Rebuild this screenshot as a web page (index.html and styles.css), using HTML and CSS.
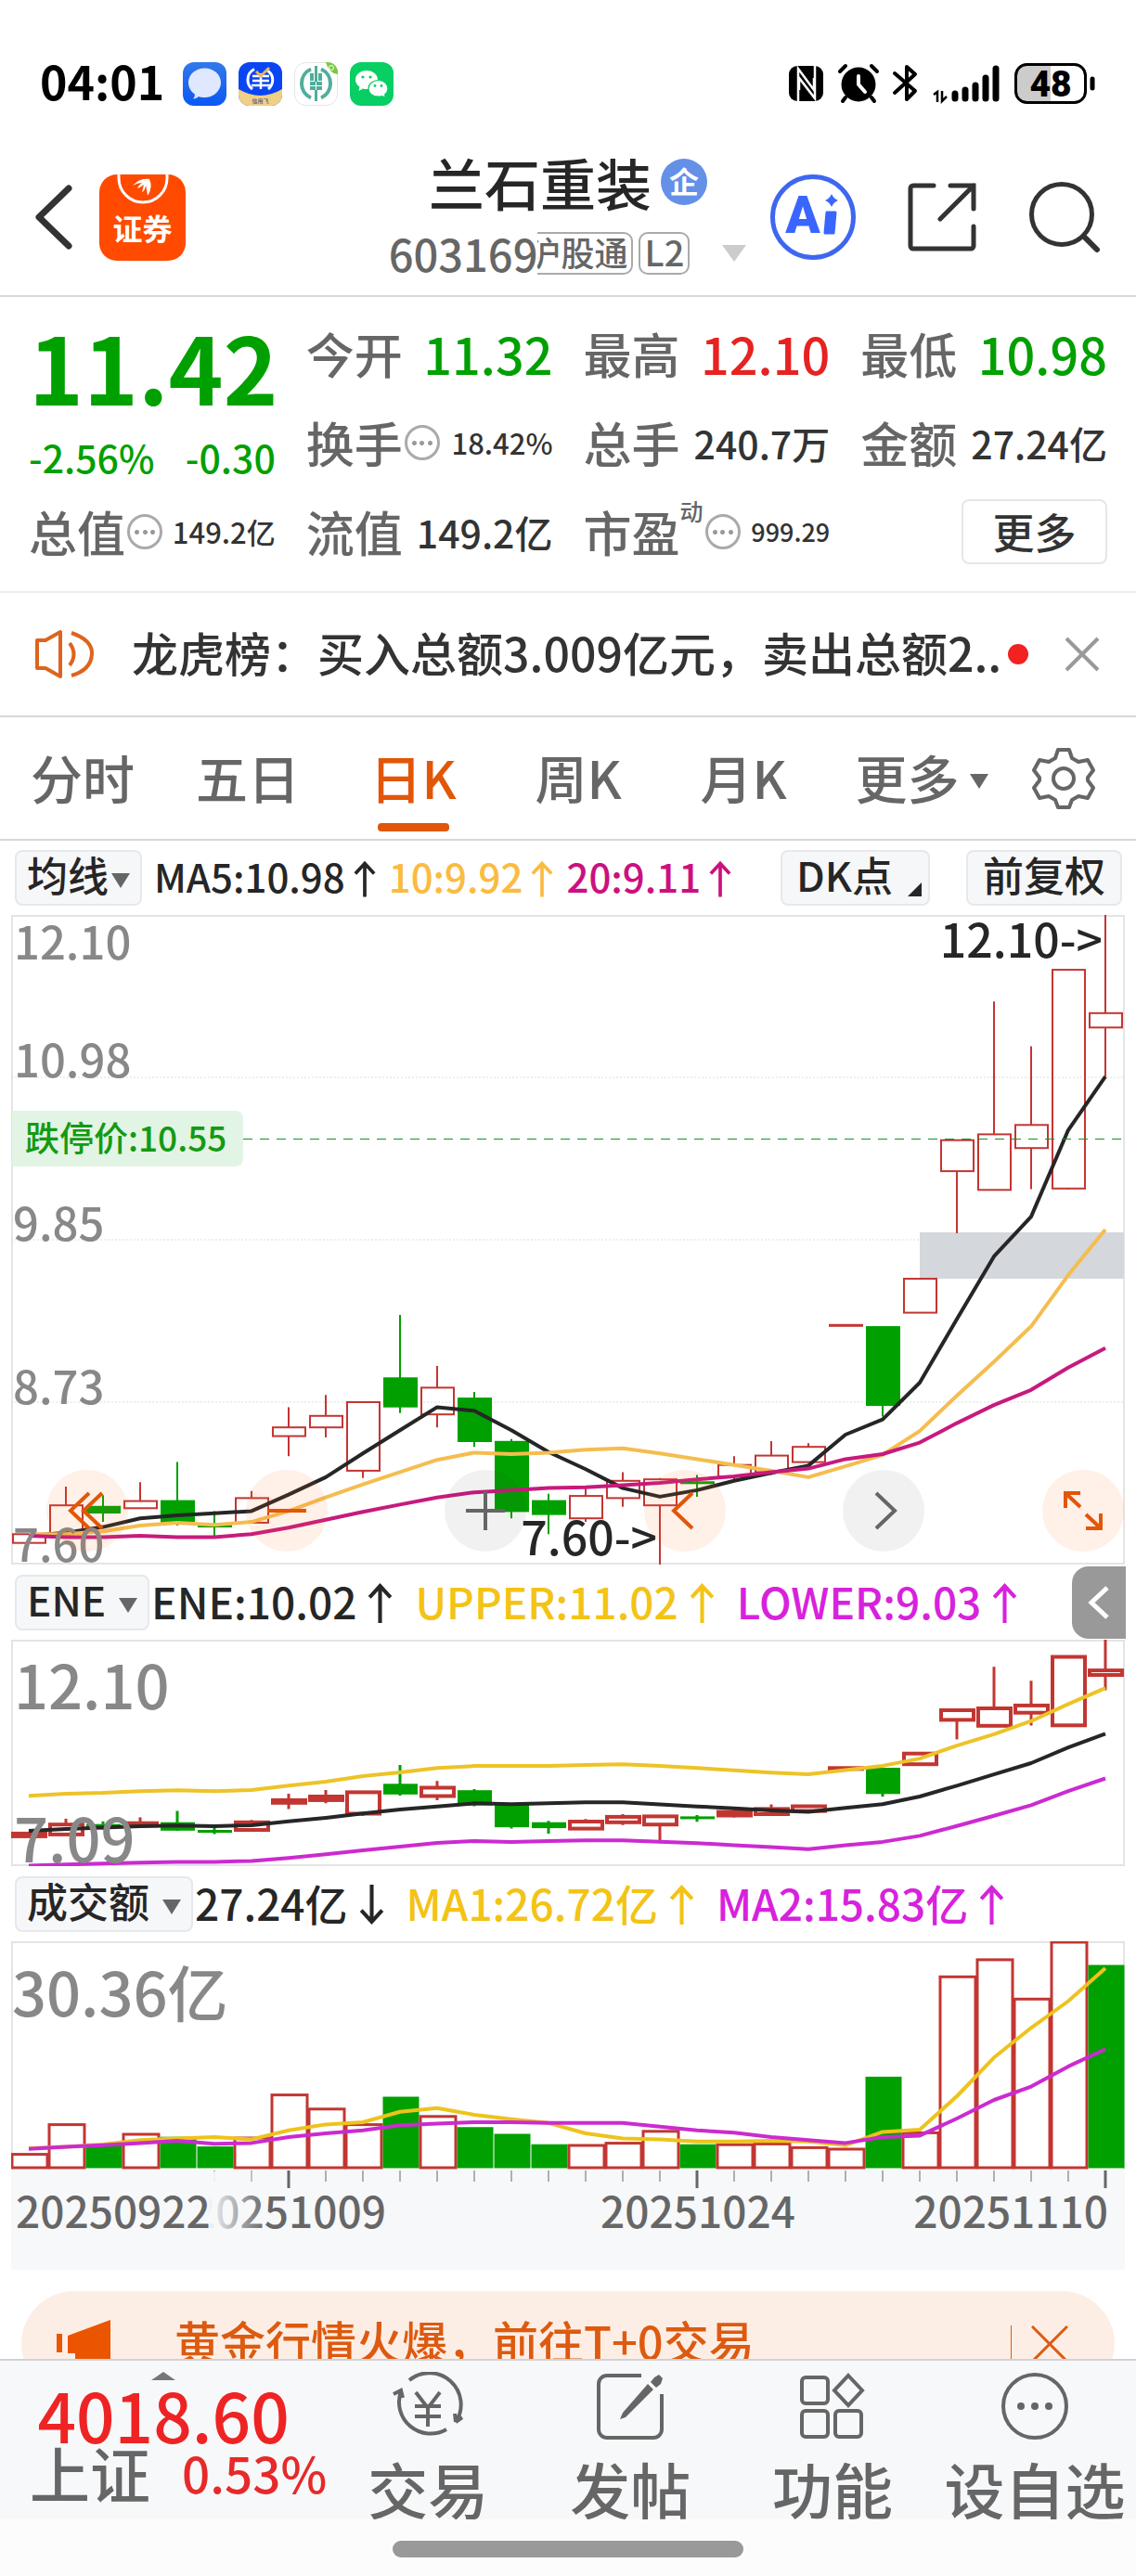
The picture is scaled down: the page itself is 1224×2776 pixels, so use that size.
FILE: index.html
```html
<!DOCTYPE html>
<html lang="zh-CN">
<head>
    <meta charset="UTF-8">
    <meta name="viewport" content="width=device-width, initial-scale=1">
    <title>兰石重装 603169</title>
    <link rel="stylesheet" href="styles.css">
</head>

<body>
    <main class="page">
        <div class="status">
            <span class="clock">04:01</span>
            <svg class="app" viewBox="0 0 47 47">
                <defs><linearGradient id="blue" x1="0" y1="0" x2="0" y2="1"><stop offset="0" stop-color="#3478ea"/><stop offset="1" stop-color="#0a58f5"/></linearGradient></defs>
                <rect width="47" height="47" rx="12" fill="url(#blue)"/>
                <path d="M23.500 6.500c10 0 17.500 7 17.500 15.500S33.500 38 23.500 38c-2.500 0-4.500-.4-6.500-1-1.500 1.500-3.500 2.500-6 2.500 1.500-1.500 2-3 1.800-5C8.500 31.500 6 27 6 22 6 13.500 13.500 6.500 23.500 6.500z" fill="#dfe8ff"/>
            </svg>
            <svg class="app" viewBox="0 0 47 47">
                <rect width="47" height="47" rx="12" fill="#0a45f2"/>
                <path d="M0 29q23.500 14 47 0v6a12 12 0 0 1-12 12H12A12 12 0 0 1 0 35z" fill="#f1cf84"/>
                <path d="M17 7.500C8 12 8 24 15 29M31 9c8 5 7 15 1 20" fill="none" stroke="#fff" stroke-width="3"/>
                <path d="M15 15h18M15 20h18M14 25h20M24 12v17" stroke="#fff" stroke-width="2.500"/>
                <path d="M19 10l5 5 9-9" fill="none" stroke="#e3b566" stroke-width="3"/>
                <text x="23.500" y="44" class="tiny">信用飞</text>
            </svg>
            <svg class="app" viewBox="0 0 47 47">
                <rect x=".5" y=".5" width="46" height="46" rx="12" fill="#fff" stroke="#e4e4e4"/>
                <path d="M34 0h2a11 11 0 0 1 11 11v2Q37 12 34 0z" fill="#7ac943"/>
                <circle cx="40" cy="6" r="2.500" fill="none" stroke="#fff"/>
                <path d="M18 7.500a17 17 0 0 0 0 31M29 7.500a17 17 0 0 1 0 31" fill="none" stroke="#4fae9b" stroke-width="4"/>
                <path d="M23.500 4v38" stroke="#4fae9b" stroke-width="3"/>
                <path d="M17 12h4v8h-4zM26 12h4v8h-4zM17 21h13v9H17z" fill="#4fae9b"/>
                <path d="M17 25.500h13M23.500 21v9" stroke="#fff"/>
            </svg>
            <svg class="app" viewBox="0 0 47 47">
                <rect width="47" height="47" rx="12" fill="#07cf63"/>
                <path d="M18 9c7 0 12 4.500 12 10s-5 10-12 10c-1.500 0-3-.2-4-.6L9.500 31l1-4.500C7.500 24.500 6 22 6 19 6 13.500 11 9 18 9z" fill="#fff"/>
                <path d="M30.500 19.500c6 0 10.500 4 10.500 9 0 2.500-1.300 4.800-3.400 6.400l.9 3.600-3.900-2c-1.300.4-2.600.6-4.100.6-6 0-10.500-3.800-10.500-8.600s4.500-9 10.500-9z" fill="#fff" stroke="#07cf63" stroke-width="1.200"/>
                <g fill="#07cf63"><circle cx="14" cy="16" r="1.600"/><circle cx="22" cy="16" r="1.600"/><circle cx="27" cy="25.500" r="1.400"/><circle cx="34" cy="25.500" r="1.400"/></g>
            </svg>
            <svg class="sys" viewBox="0 0 336 46">
                <rect x="6" y="4" width="37" height="38" rx="9"/>
                <path d="M16 42V7l17 23V17M34 4v35L17 17v13" fill="none" stroke="#fff" stroke-width="2.500"/>
                <circle cx="81" cy="24" r="18.500"/>
                <path d="M81 15v9l7 8" fill="none" stroke="#fff" stroke-width="4" stroke-linecap="round"/>
                <path d="M61 10l6-6M101 10l-6-6M67 38l-3 4M95 38l3 4" stroke="#000" stroke-width="4" stroke-linecap="round"/>
                <path d="M120 12l22 19-9 9V5l9 8-22 20" fill="none" stroke="#000" stroke-width="4" stroke-linejoin="round" stroke-linecap="round"/>
                <path d="M162 35l4-3v11M171 31v11l5-5" fill="none" stroke="#000" stroke-width="2.500"/>
                <g stroke="#000" stroke-width="7" stroke-linecap="round"><path d="M185 34v5M196 30v9M207 25v14M218 17v22M229 7v32"/></g>
                <rect x="250.500" y="2.500" width="75" height="41" rx="12" fill="#fff"/>
                <path d="M288 3v40h-26a11 11 0 0 1-11-11V14a11 11 0 0 1 11-11z" fill="#ccc"/>
                <rect x="250.500" y="2.500" width="75" height="41" rx="12" fill="none" stroke="#000" stroke-width="3"/>
                <path d="M333 18v10" stroke="#000" stroke-width="5" stroke-linecap="round"/>
                <text x="288" y="37" class="charge">48</text>
            </svg>
        </div>

        <header class="header">
            <div class="header-side">
                <button class="plain" aria-label="返回">
                    <svg width="40" height="70" viewBox="0 0 40 70"><path d="M36 4L4 35l32 31" fill="none" stroke="#333" stroke-width="7" stroke-linecap="round" stroke-linejoin="round"/></svg>
                </button>
                <a class="brand" href="#" aria-label="证券">
                    <svg width="93" height="93" viewBox="0 0 93 93">
                        <rect width="93" height="93" rx="19" fill="#ff4a00"/>
                        <path d="M21 0v4a26 26 0 0 0 52 0V0" fill="none" stroke="#fff" stroke-width="3"/>
                        <path d="M36 12q8-9 18-7 4 9-2 18-1-8-2-11-1 6-4 7 1-4 2-8-4 3-7 4 2-4 5-6-5 0-10 3z" fill="#fff"/>
                        <text x="46.500" y="71" class="brand-text">证券</text>
                    </svg>
                </a>
            </div>
            <div class="stock">
                <h1 class="stock-name">兰石重装 <span class="badge">企</span></h1>
                <div class="stock-code">
                    <span>603169</span>
                    <span class="tag-clip"><span class="tag">沪股通</span></span>
                    <span class="tag tag-l2">L2</span>
                    <svg width="28" height="20" viewBox="0 0 28 20"><path d="M1 1h26L14 19z" fill="#ccc"/></svg>
                </div>
            </div>
            <div class="header-side header-tools">
                <button class="plain" aria-label="Ai">
                    <svg width="92" height="92" viewBox="0 0 92 92">
                        <circle cx="46" cy="46" r="43.500" fill="none" stroke="#3e67f0" stroke-width="5"/>
                        <text x="35" y="63" class="ai">A</text>
                        <path d="M61 41h9l-2 22h-9z" fill="#3a66ff" stroke="#3a66ff" stroke-width="3" stroke-linejoin="round"/>
                        <path d="M66 21q2 5 7 7-5 2-7 7-2-5-7-7 5-2 7-7z" fill="#3a66ff"/>
                    </svg>
                </button>
                <button class="plain" aria-label="分享">
                    <svg width="74" height="74" viewBox="0 0 74 74"><path d="M28 3H6a3 3 0 0 0-3 3v62a3 3 0 0 0 3 3h62a3 3 0 0 0 3-3V47M46 3h25v25M71 3L35 39" fill="none" stroke="#333" stroke-width="5" stroke-linecap="round"/></svg>
                </button>
                <button class="plain" aria-label="搜索">
                    <svg width="78" height="78" viewBox="0 0 78 78"><circle cx="36" cy="36" r="32.500" fill="none" stroke="#333" stroke-width="5"/><path d="M60 60l14 14" stroke="#333" stroke-width="6" stroke-linecap="round"/></svg>
                </button>
            </div>
        </header>

        <section class="quote">
            <div class="price">
                <strong>11.42</strong>
                <div class="change"><span>-2.56%</span><span>-0.30</span></div>
            </div>
            <div class="item"><span>今开</span><b class="big green">11.32</b></div>
            <div class="item"><span>最高</span><b class="big red">12.10</b></div>
            <div class="item"><span>最低</span><b class="big green">10.98</b></div>
            <div class="item"><span>换手</span><i class="info"></i><b class="small">18.42%</b></div>
            <div class="item"><span>总手</span><b>240.7万</b></div>
            <div class="item"><span>金额</span><b>27.24亿</b></div>
            <div class="item"><span>总值</span><i class="info"></i><b class="small">149.2亿</b></div>
            <div class="item"><span>流值</span><b>149.2亿</b></div>
            <div class="item"><span>市盈</span><sup>动</sup><i class="info"></i><b class="tight">999.29</b></div>
            <div class="item"><button class="more">更多</button></div>
        </section>

        <section class="notice">
            <svg width="64" height="54" viewBox="0 0 64 54"><path d="M3 12h9L28 3v48L12 42H3z" fill="none" stroke="#dd641f" stroke-width="4" stroke-linejoin="round"/><path d="M38 15q9 12 0 24M40 4q23 8 22 23-1 17-22 23" fill="none" stroke="#dd641f" stroke-width="4"/></svg>
            <p>龙虎榜：买入总额3.009亿元，卖出总额2..</p>
            <i class="dot"></i>
            <button class="plain" aria-label="关闭"><svg width="38" height="38" viewBox="0 0 38 38"><path d="M2 2l34 34M36 2L2 36" stroke="#999" stroke-width="4"/></svg></button>
        </section>

        <nav class="tabs">
            <a href="#">分时</a>
            <a href="#">五日</a>
            <a href="#" class="active">日K</a>
            <a href="#">周K</a>
            <a href="#">月K</a>
            <a href="#" class="wide">更多<i class="caret"></i></a>
            <button class="plain gear" aria-label="设置">
                <svg width="68" height="68" viewBox="0 0 68 68"><path d="M28 3h12l3 9 7 4 10-2 6 11-6 8v3l6 8-6 11-10-2-7 4-3 8H28l-3-8-7-4-10 2-6-11 6-8v-3l-6-8 6-11 10 2 7-4z" fill="none" stroke="#666" stroke-width="4" stroke-linejoin="round"/><circle cx="34" cy="34" r="11" fill="none" stroke="#666" stroke-width="4"/></svg>
            </button>
        </nav>

        <div class="legend">
            <button class="chip">均线<i class="caret"></i></button>
            <span class="val">MA5:10.98<svg class="arrow"><use href="#up"/></svg></span>
            <span class="val orange">10:9.92<svg class="arrow"><use href="#up"/></svg></span>
            <span class="val pink">20:9.11<svg class="arrow"><use href="#up"/></svg></span>
            <button class="chip dk">DK点<i class="corner"></i></button>
            <button class="chip">前复权</button>
        </div>
        <div class="chart">
            <svg viewBox="0 0 1200 700">
                <rect class="frame" x="1" y="1" width="1198" height="698"/>
                <path class="grid" d="M0 175h1200M0 350h1200M0 525h1200"/>
                <rect x="979" y="342" width="220" height="50" fill="#d4d7db"/>
                <g id="kline"></g>
                <path class="limit" d="M250 241.500h949"/>
                <path d="M1 211h241a8 8 0 0 1 8 8v44a8 8 0 0 1-8 8H1z" fill="#e2f4e4"/>
                <text class="limit-text" x="15" y="255">跌停价:10.55</text>
                <text class="mark" x="1176" y="46">12.10-&gt;</text>
                <text class="mark" x="696" y="690">7.60-&gt;</text>
                <g class="axis">
                    <text x="3" y="48">12.10</text>
                    <text x="3" y="175">10.98</text>
                    <text x="2" y="351">9.85</text>
                    <text x="2" y="527">8.73</text>
                    <text x="2" y="697">7.60</text>
                </g>
            </svg>
            <div class="tools">
                <button class="round" aria-label="最左"><svg viewBox="0 0 44 44"><path d="M24 3L4 22l20 19M38 3L18 22l20 19"/></svg></button>
                <button class="round" aria-label="缩小"><svg viewBox="0 0 44 44"><path d="M1 22h42"/></svg></button>
                <button class="round gray" aria-label="放大"><svg viewBox="0 0 44 44"><path d="M1 22h42M22 1v42"/></svg></button>
                <button class="round" aria-label="左移"><svg viewBox="0 0 44 44"><path d="M30 3L10 22l20 19"/></svg></button>
                <button class="round gray" aria-label="右移"><svg viewBox="0 0 44 44"><path d="M14 3l20 19-20 19"/></svg></button>
                <button class="round" aria-label="全屏"><svg viewBox="0 0 44 44"><path d="M19 3H3v16M3 3l16 15M25 41h16V25M41 41L25 26"/></svg></button>
            </div>
        </div>

        <div class="legend big-legend">
            <button class="chip">ENE<i class="caret"></i></button>
            <span class="val">ENE:10.02<svg class="arrow"><use href="#up"/></svg></span>
            <span class="val yellow">UPPER:11.02<svg class="arrow"><use href="#up"/></svg></span>
            <span class="val purple">LOWER:9.03<svg class="arrow"><use href="#up"/></svg></span>
            <button class="drawer" aria-label="展开"><svg width="24" height="36" viewBox="0 0 24 36"><path d="M21 2L4 18l17 16" fill="none" stroke="#fff" stroke-width="5"/></svg></button>
        </div>
        <div class="chart">
            <svg viewBox="0 0 1200 244">
                <rect class="frame" x="1" y="1" width="1198" height="242"/>
                <g id="ene"></g>
                <g class="axis axis-big">
                    <text x="3" y="75">12.10</text>
                    <text x="3" y="240">7.09</text>
                </g>
            </svg>
        </div>

        <div class="legend big-legend">
            <button class="chip">成交额<i class="caret"></i></button>
            <span class="val">27.24亿<svg class="arrow"><use href="#down"/></svg></span>
            <span class="val yellow">MA1:26.72亿<svg class="arrow"><use href="#up"/></svg></span>
            <span class="val purple">MA2:15.83亿<svg class="arrow"><use href="#up"/></svg></span>
        </div>
        <div class="chart">
            <svg viewBox="0 0 1200 354">
                <defs>
                    <linearGradient id="fade"><stop offset="0" stop-color="#f7f8fa"/><stop offset="1" stop-color="#f7f8fa" stop-opacity="0"/></linearGradient>
                </defs>
                <path class="frame" d="M1 246V1h1198v245"/>
                <g class="axis axis-big"><text x="1" y="81">30.36亿</text></g>
                <g id="volume"></g>
                <rect y="246" width="1200" height="108" fill="#f7f8fa"/>
                <g id="ticks"></g>
                <g class="dates">
                    <text x="299" y="309" text-anchor="middle">20251009</text>
                    <rect x="0" y="248" width="212" height="80" fill="#f7f8fa"/>
                    <rect x="211" y="248" width="64" height="80" fill="url(#fade)"/>
                    <text x="5" y="309">20250922</text>
                    <text x="740" y="309" text-anchor="middle">20251024</text>
                    <text x="1182" y="309" text-anchor="end">20251110</text>
                </g>
            </svg>
        </div>

        <div class="banner">
            <svg width="64" height="60" viewBox="0 0 64 60"><path d="M0 19h6v20H0zM12 21L58 4v52L30 46v12H20V40h-8z" fill="#eb5500"/></svg>
            <p>黄金行情火爆，前往T+0交易</p>
            <button class="plain banner-close" aria-label="关闭"><svg width="40" height="40" viewBox="0 0 40 40"><path d="M1 1l38 38M39 1L1 39" stroke="#dd5a10" stroke-width="3"/></svg></button>
        </div>
    </main>

    <footer class="bottom">
        <a class="index" href="#">
            <i class="up-caret"></i>
            <span class="index-value">4018.60</span>
            <span class="index-row"><span>上证</span><b>0.53%</b></span>
        </a>
        <a href="#">
            <svg viewBox="0 0 84 74"><path d="M22 9A34 34 0 0 1 72 54M62 62A34 34 0 0 1 13 21M72 54l7-5M72 54l-1-9M5 24l8-4 2 8M29 22l13 17 13-17M28 37h28M28 48h28M42 37v22"/></svg>
            <span>交易</span>
        </a>
        <a href="#">
            <svg viewBox="0 0 84 74"><path d="M54 4H17a9 9 0 0 0-9 9v49a9 9 0 0 0 9 9h50a9 9 0 0 0 9-9V24"/><path class="fill" d="M68 6l5-3 4 4-2 6-5 4-6-6zM61 13l6 6-30 30-6 2 3-7z"/></svg>
            <span>发帖</span>
        </a>
        <a href="#">
            <svg viewBox="0 0 84 74"><rect x="9" y="6" width="28" height="28" rx="4"/><rect x="9" y="42" width="28" height="28" rx="4"/><rect x="45" y="42" width="28" height="28" rx="4"/><path d="M59 4l15 16-15 16-15-16z"/></svg>
            <span>功能</span>
        </a>
        <a href="#">
            <svg viewBox="0 0 84 74"><circle cx="42" cy="37" r="34"/><g class="fill"><circle cx="27" cy="37" r="4"/><circle cx="42" cy="37" r="4"/><circle cx="57" cy="37" r="4"/></g></svg>
            <span>设自选</span>
        </a>
    </footer>
    <div class="home"><i></i></div>

    <svg class="symbols">
        <symbol id="up" viewBox="0 0 26 42"><path d="M13 42V2M2 15L13 3l11 12" fill="none" stroke="currentColor" stroke-width="4"/></symbol>
        <symbol id="down" viewBox="0 0 26 42"><path d="M13 0v40M2 27l11 12 11-12" fill="none" stroke="currentColor" stroke-width="4"/></symbol>
    </svg>
    <script src="chart.js"></script>
</body>
</html>
```
FILE: styles.css
```css
* {
    box-sizing: border-box;
}

body {
    margin: 0;
    height: 100vh;
    display: flex;
    flex-direction: column;
    overflow: hidden;
    background-color: #fff;
    color: #333;
    font-family: "Noto Sans CJK SC", sans-serif;
    font-weight: 500;
}

a {
    color: inherit;
    text-decoration: none;
}

button {
    font: inherit;
    color: inherit;
    padding: 0;
    cursor: pointer;
}

svg {
    display: block;
    flex-shrink: 0;
}

b, i, h1, p, sup {
    font-weight: inherit;
    font-style: normal;
    margin: 0;
}

.plain {
    border: none;
    background: none;
}

.symbols {
    display: none;
}

.page {
    flex: 1;
    min-height: 0;
    overflow: hidden;
}

/* status bar */
.status {
    display: flex;
    align-items: center;
    gap: 13px;
    height: 150px;
    padding: 30px 44px 0 43px;
    color: #000;
}

.clock {
    font-size: 50px;
    font-weight: 700;
    line-height: 60px;
    padding-right: 7px;
    margin-top: -8px;
}

.app {
    width: 47px;
    height: 47px;
}

.tiny {
    font-size: 6px;
    fill: #44588c;
    text-anchor: middle;
}

.sys {
    width: 336px;
    height: 46px;
    margin-left: auto;
}

.charge {
    font-family: Roboto, sans-serif;
    font-size: 39px;
    font-weight: 900;
    text-anchor: middle;
}

/* header */
.header {
    display: grid;
    grid-template-columns: 1fr auto 1fr;
    align-items: center;
    height: 170px;
    padding: 0 38px;
    border-bottom: 2px solid #d8d8d8;
}

.header-side {
    display: flex;
    align-items: center;
    gap: 29px;
}

.header-tools {
    justify-content: flex-end;
    gap: 56px;
}

.brand-text {
    fill: #fff;
    font-size: 32px;
    font-weight: 700;
    text-anchor: middle;
}

.ai {
    fill: #3a66ff;
    font-family: Roboto, sans-serif;
    font-size: 55px;
    font-weight: 900;
    text-anchor: middle;
}

.stock-name {
    display: flex;
    align-items: center;
    justify-content: center;
    gap: 10px;
    color: #262626;
    font-size: 60px;
    line-height: 76px;
}

.badge {
    width: 50px;
    height: 50px;
    border-radius: 50%;
    background-color: #6490e8;
    color: #fff;
    font-size: 32px;
    font-weight: 700;
    line-height: 46px;
    text-align: center;
}

.stock-code {
    display: flex;
    align-items: center;
    color: #666;
    font-size: 47px;
    line-height: 74px;
    padding-top: 2px;
}

.tag {
    display: block;
    height: 46px;
    padding: 0 4px;
    border: 2px solid #aaa;
    border-radius: 10px;
    font-size: 36px;
    line-height: 38px;
    white-space: nowrap;
}

.tag-clip {
    display: flex;
    justify-content: flex-end;
    width: 103px;
    overflow: hidden;
}

.tag-l2 {
    margin: 0 34px 0 6px;
    font-size: 38px;
}

/* quote grid */
.quote {
    display: grid;
    grid-template-columns: repeat(4, minmax(0, 1fr));
    grid-auto-rows: 96px;
    column-gap: 33px;
    height: 319px;
    padding: 13px 31px 0;
    border-bottom: 2px solid #eee;
}

.price {
    grid-row: span 2;
    color: #00a000;
}

.price strong {
    display: block;
    font-size: 100px;
    line-height: 122px;
    text-align: center;
}

.change {
    display: flex;
    justify-content: space-between;
    font-size: 41px;
    line-height: 74px;
}

.item {
    display: flex;
    align-items: center;
    color: #666;
    font-size: 52px;
    line-height: 60px;
    white-space: nowrap;
}

.item b {
    margin-left: auto;
    color: #333;
    font-size: 41px;
}

.item .big {
    font-size: 54px;
}

.item .small {
    font-size: 31px;
}

.item .tight {
    font-size: 27px;
}

.item .green {
    color: #00a000;
}

.item .red {
    color: #e62222;
}

.item sup {
    align-self: flex-start;
    padding-top: 10px;
    font-size: 25px;
    line-height: 30px;
}

.info {
    width: 38px;
    height: 38px;
    margin-left: 2px;
    border: 3px solid #aaa;
    border-radius: 50%;
    background: radial-gradient(circle, #999 2px, transparent 3px) center / 9px 9px no-repeat,
        radial-gradient(circle, #999 2px, transparent 3px) 3px center / 9px 9px no-repeat,
        radial-gradient(circle, #999 2px, transparent 3px) 20px center / 9px 9px no-repeat;
}

.more {
    width: 157px;
    height: 70px;
    margin-left: auto;
    border: 2px solid #e6e6e6;
    border-radius: 8px;
    background-color: #fff;
    color: #333;
    font-size: 45px;
    line-height: 60px;
}

/* notice */
.notice {
    display: flex;
    align-items: center;
    height: 134px;
    padding: 0 39px 0 37px;
    border-bottom: 2px solid #d8d8d8;
}

.notice p {
    flex: 1;
    padding-left: 41px;
    font-size: 50px;
    line-height: 60px;
    margin-top: -6px;
    white-space: nowrap;
}

.dot {
    width: 22px;
    height: 22px;
    margin-right: 39px;
    border-radius: 50%;
    background-color: #f22222;
}

/* period tabs */
.tabs {
    display: flex;
    height: 133px;
    padding-right: 28px;
    border-bottom: 2px solid #d8d8d8;
    color: #666;
    font-size: 56px;
    line-height: 128px;
}

.tabs a {
    flex: 178;
    text-align: center;
    white-space: nowrap;
}

.tabs .wide {
    flex: 206;
}

.tabs .active {
    display: flex;
    flex-direction: column;
    align-items: center;
    color: #e25607;
}

.tabs .active::after {
    content: "";
    width: 77px;
    height: 9px;
    margin-top: -14px;
    border-radius: 4px;
    background-color: #e25607;
}

.gear {
    display: flex;
    flex: 100;
    align-items: center;
    justify-content: center;
}

.caret {
    display: inline-block;
    vertical-align: middle;
    margin-left: 11px;
    border: 10px solid transparent;
    border-top: 16px solid #666;
    border-bottom: none;
}

.tabs .caret {
    margin-bottom: 8px;
}

/* indicator rows */
.legend {
    display: flex;
    align-items: center;
    height: 80px;
    padding: 0 15px 0 16px;
    color: #262626;
    font-size: 42px;
    line-height: 52px;
    white-space: nowrap;
}

.chip {
    height: 60px;
    margin-right: 13px;
    padding: 0 11px 8px;
    border: 2px solid #e6e8eb;
    border-radius: 8px;
    background-color: #f6f7f9;
    font-size: 44px;
    line-height: 48px;
    white-space: nowrap;
}

.chip:last-child {
    margin-right: 0;
    padding: 0 16px 8px;
}

.chip .caret {
    margin-left: 3px;
}

.dk {
    display: flex;
    align-items: flex-end;
    margin: 0 39px 0 auto;
    padding: 0 7px 8px 15px;
}

.corner {
    margin-left: 16px;
    border-left: 15px solid transparent;
    border-bottom: 15px solid #262626;
}

.val {
    display: flex;
    align-items: center;
    margin: -4px 14px 0 0;
}

.arrow {
    width: 24px;
    height: 42px;
    margin: 6px 0 0 9px;
}

.big-legend {
    height: 81px;
    padding: 0 11px 0 16px;
    font-size: 46px;
}

.big-legend .chip {
    margin-right: 2px;
}

.big-legend .chip .caret {
    margin-left: 14px;
}

.big-legend .val {
    margin-right: 24px;
}

.big-legend .arrow {
    width: 27px;
    height: 43px;
    margin-left: 12px;
}

.orange { color: #fbbb40; }
.pink { color: #cc1080; }
.yellow { color: #f3c315; }
.purple { color: #d722dd; }

.drawer {
    display: flex;
    align-items: center;
    justify-content: center;
    width: 58px;
    height: 78px;
    margin-left: auto;
    border: none;
    border-radius: 18px 0 0 18px;
    background-color: #999;
}

/* charts */
.chart {
    position: relative;
    padding: 0 12px;
}

.chart > svg {
    width: 100%;
    height: auto;
}

.frame {
    fill: none;
    stroke: #e4e4e4;
    stroke-width: 2;
}

.grid {
    stroke: #ddd;
    stroke-dasharray: 2 2;
}

.limit {
    stroke: #109420;
    stroke-width: 1;
    stroke-dasharray: 10 8;
}

.limit-text {
    fill: #139a13;
    font-size: 37px;
}

.mark {
    fill: #262626;
    font-size: 50px;
    text-anchor: end;
}

.axis {
    fill: #888;
    font-size: 49px;
}

.axis-big {
    font-size: 65px;
}

.dates {
    fill: #666;
    font-size: 46px;
}

.rise {
    fill: none;
    stroke: #c23632;
}

.fall {
    fill: #00a000;
    stroke: #00a000;
}

.line {
    fill: none;
    stroke-width: 4;
    stroke-linejoin: round;
}

.tools {
    position: absolute;
    left: 50px;
    right: 13px;
    bottom: 14px;
    display: flex;
    justify-content: space-between;
}

.round {
    display: flex;
    align-items: center;
    justify-content: center;
    width: 88px;
    height: 88px;
    border: none;
    border-radius: 50%;
    background-color: rgba(255, 110, 30, 0.1);
}

.round svg {
    width: 44px;
    height: 44px;
    fill: none;
    stroke: #e25607;
    stroke-width: 4;
}

.round.gray {
    background-color: rgba(60, 60, 60, 0.07);
}

.round.gray svg {
    stroke: #666;
}

/* promo banner */
.banner {
    display: flex;
    align-items: center;
    height: 114px;
    margin: 23px 23px 0;
    padding: 0 50px 0 38px;
    border-radius: 57px;
    background-color: #fdeee5;
    color: #dd5a10;
    font-size: 49px;
    line-height: 60px;
}

.banner p {
    flex: 1;
    padding: 0 0 8px 63px;
}

.banner-close {
    padding-left: 21px;
    border-left: 1px solid #dd5a10;
}

/* bottom bar */
.bottom {
    display: flex;
    height: 173px;
    border-top: 2px solid #d0d2d8;
    background-color: #f7f8fa;
    color: #666;
    overflow: hidden;
}

.bottom a {
    display: flex;
    flex: 218;
    flex-direction: column;
    align-items: center;
    padding-top: 12px;
    font-size: 65px;
    line-height: 76px;
    white-space: nowrap;
}

.bottom svg {
    width: 84px;
    height: 74px;
    margin-bottom: 13px;
    fill: none;
    stroke: #666;
    stroke-width: 4;
}

.bottom .fill {
    fill: #666;
    stroke: none;
}

.bottom .index {
    flex: 352;
}

.up-caret {
    border: 13px solid transparent;
    border-bottom: 9px solid #777;
    border-top: none;
}

.index-value {
    color: #ee2424;
    font-size: 73px;
    line-height: 64px;
    padding-top: 4px;
}

.index-row {
    display: flex;
    align-items: center;
    gap: 34px;
    padding-left: 32px;
    line-height: 62px;
}

.index-row b {
    color: #e62a2a;
    font-size: 53px;
}

.home {
    display: flex;
    justify-content: center;
    height: 61px;
    padding-top: 23px;
    background-color: #fcfcfc;
}

.home i {
    width: 378px;
    height: 18px;
    border-radius: 9px;
    background-color: #999;
}
```
FILE: chart.js
```js
// high, body top, body bottom, low, rise
const candles = [
    [7.81, 7.81, 7.75, 7.74, 1], [8.14, 8.01, 7.79, 7.79, 1], [8.08, 8.00, 7.96, 7.895, 0],
    [8.17, 8.04, 7.99, 7.99, 1], [8.31, 8.04, 7.895, 7.87, 0], [7.97, 7.87, 7.865, 7.80, 0],
    [8.11, 8.06, 7.89, 7.89, 1], [8.69, 8.55, 8.49, 8.35, 1], [8.775, 8.63, 8.55, 8.48, 1],
    [8.725, 8.725, 8.25, 8.20, 1], [9.33, 8.89, 8.695, 8.65, 0], [8.975, 8.825, 8.64, 8.55, 1],
    [8.795, 8.75, 8.455, 8.415, 0], [8.47, 8.45, 7.97, 7.92, 0], [8.09, 8.04, 7.95, 7.81, 0],
    [8.13, 8.075, 7.92, 7.895, 1], [8.24, 8.18, 8.06, 8.00, 1], [8.20, 8.19, 8.01, 7.60, 1],
    [8.22, 8.17, 8.165, 8.07, 0], [8.35, 8.29, 8.21, 8.17, 1], [8.455, 8.355, 8.24, 8.22, 1],
    [8.44, 8.415, 8.31, 8.31, 1], [9.26, 9.26, 9.26, 9.26, 1], [9.245, 9.245, 8.705, 8.625, 0],
    [9.58, 9.58, 9.345, 9.345, 1], [10.54, 10.54, 10.325, 9.895, 1], [11.50, 10.58, 10.195, 10.195, 1],
    [11.19, 10.645, 10.485, 10.20, 1], [11.72, 11.72, 10.205, 10.20, 1], [12.10, 11.42, 11.32, 10.98, 1]
];

const ma5 = [7.80, 7.82, 7.86, 7.92, 7.94, 7.955, 7.97, 8.085, 8.205, 8.37, 8.53, 8.69, 8.665, 8.53, 8.38, 8.26, 8.13, 8.07, 8.115, 8.18, 8.235, 8.285, 8.50, 8.605, 8.86, 9.30, 9.735, 10.01, 10.61, 10.98];
const ma10 = [7.81, 7.81, 7.83, 7.87, 7.89, 7.875, 7.895, 7.97, 8.065, 8.155, 8.24, 8.325, 8.375, 8.365, 8.375, 8.395, 8.405, 8.37, 8.33, 8.29, 8.25, 8.205, 8.28, 8.36, 8.525, 8.77, 9.005, 9.25, 9.605, 9.92];
const ma20 = [7.80, 7.79, 7.79, 7.80, 7.79, 7.79, 7.81, 7.855, 7.91, 7.965, 8.015, 8.065, 8.10, 8.115, 8.13, 8.135, 8.15, 8.165, 8.19, 8.21, 8.24, 8.265, 8.33, 8.365, 8.445, 8.58, 8.705, 8.81, 8.965, 9.10];

const upper = [8.645, 8.69, 8.71, 8.75, 8.77, 8.75, 8.775, 8.87, 8.96, 9.08, 9.165, 9.26, 9.305, 9.305, 9.305, 9.33, 9.345, 9.305, 9.26, 9.21, 9.16, 9.125, 9.215, 9.31, 9.47, 9.755, 10.01, 10.30, 10.675, 11.03];
const ene = [7.87, 7.91, 7.94, 7.975, 7.99, 7.975, 7.995, 8.08, 8.16, 8.255, 8.34, 8.41, 8.48, 8.46, 8.48, 8.50, 8.50, 8.455, 8.41, 8.37, 8.325, 8.29, 8.38, 8.46, 8.63, 8.87, 9.12, 9.37, 9.715, 10.02];
const lower = [7.10, 7.125, 7.145, 7.165, 7.185, 7.185, 7.205, 7.27, 7.35, 7.44, 7.52, 7.605, 7.645, 7.625, 7.645, 7.66, 7.66, 7.63, 7.60, 7.55, 7.51, 7.465, 7.55, 7.625, 7.76, 7.98, 8.205, 8.44, 8.75, 9.03];

// amounts in 亿
const amounts = [1.8, 5.8, 3.2, 4.5, 4.1, 2.8, 4.0, 9.8, 7.9, 5.8, 9.5, 6.9, 5.4, 4.5, 3.1, 3.0, 3.3, 4.9, 3.1, 3.1, 3.2, 2.7, 2.5, 12.2, 4.7, 25.7, 28.0, 22.7, 30.36, 27.24];
const amountMa1 = [2.5, 2.7, 3.0, 3.6, 3.8, 4.0, 3.7, 4.9, 5.7, 6.0, 7.4, 7.9, 7.0, 6.4, 5.9, 4.5, 3.8, 3.7, 3.4, 3.4, 3.5, 3.4, 2.9, 4.7, 5.0, 9.5, 14.7, 18.7, 22.3, 26.72];
const amountMa2 = [2.4, 2.7, 2.9, 3.2, 3.5, 3.1, 3.2, 4.0, 4.5, 4.9, 5.6, 5.8, 6.0, 6.0, 5.9, 5.9, 5.9, 5.4, 4.9, 4.6, 4.0, 3.6, 3.2, 4.0, 4.2, 6.5, 9.0, 10.8, 13.5, 15.83];
const amountFalls = [2, 4, 5, 10, 12, 13, 14, 18, 23, 29];

function xAt(i) {
    return 19 + i * 40;
}

function scale(max, min, height) {
    return value => Math.round((max - value) / (max - min) * height * 10) / 10;
}

function drawCandles(y, stroke) {
    return candles.map(([high, top, bottom, low, rise], i) => {
        const x = xAt(i);
        const h = Math.max(y(bottom) - y(top), 1);
        return `<g class="${rise ? 'rise' : 'fall'}" stroke-width="${rise ? stroke : 2}">
            <path d="M${x} ${y(high)}V${y(top)}M${x} ${y(bottom)}V${y(low)}" stroke-width="${stroke > 2 ? 3 : 2}"/>
            <rect x="${x - 17}" y="${y(top)}" width="35" height="${h}"/></g>`;
    }).join('');
}

function drawLine(values, y, color) {
    const points = values.map((v, i) => xAt(i) + ',' + y(v)).join(' ');
    return `<polyline class="line" points="${points}" stroke="${color}"/>`;
}

function drawVolume(y) {
    return amounts.map((v, i) => {
        const fall = amountFalls.includes(i);
        return `<rect class="${fall ? 'fall' : 'rise'}" stroke-width="${fall ? 1 : 3}" x="${xAt(i) - 18}" y="${y(v) + 1}" width="38" height="${243 - y(v)}"/>`;
    }).join('');
}

function drawTicks() {
    let ticks = '';
    for (let i = 5; i < 30; i++) {
        const major = i === 7 || i === 18 || i === 29;
        ticks += `<path d="M${xAt(i)} 247v${major ? 19 : 12}" stroke="#666" stroke-width="${major ? 3 : 1}"/>`;
    }
    return ticks;
}

const yMain = scale(12.10, 7.60, 700);
const yEne = scale(12.10, 7.09, 244);
const yVol = scale(30.36, 0, 243);

document.getElementById('kline').innerHTML = drawCandles(yMain, 2) +
    drawLine(ma5, yMain, '#262626') + drawLine(ma10, yMain, '#f5bd4f') + drawLine(ma20, yMain, '#c71a7d');
document.getElementById('ene').innerHTML = drawCandles(yEne, 4) +
    drawLine(upper, yEne, '#edc327') + drawLine(ene, yEne, '#262626') + drawLine(lower, yEne, '#cb2bd0');
document.getElementById('volume').innerHTML = drawVolume(yVol) +
    drawLine(amountMa1, yVol, '#edc31c') + drawLine(amountMa2, yVol, '#cb2bd0');
document.getElementById('ticks').innerHTML = drawTicks();
```
